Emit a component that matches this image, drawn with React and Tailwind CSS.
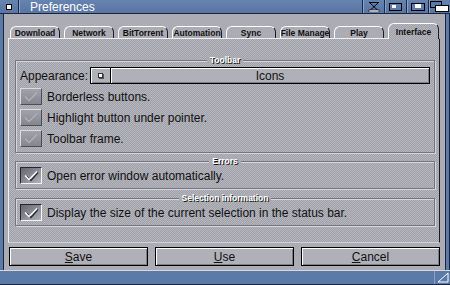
import React from 'react'

const tabs = ['Download', 'Network', 'BitTorrent', 'Automation', 'Sync', 'File Manage', 'Play', 'Interface']

function CheckBox({ checked }) {
  return (
    <div
      className={
        checked
          ? 'w-[22px] h-[17px] shrink-0 flex items-center justify-center border border-t-[#26262e] border-l-[#26262e] border-b-[#f4f4f8] border-r-[#f4f4f8] bg-linear-to-br from-[#66666e] to-[#b2b2ba]'
          : 'w-[22px] h-[17px] shrink-0 flex items-center justify-center border border-t-[#dadae2] border-l-[#dadae2] border-b-[#4e4e56] border-r-[#4e4e56] bg-linear-to-b from-[#a2a2aa] to-[#86868e]'
      }
    >
      <svg width="16" height="13" viewBox="0 0 16 13">
        {checked && <path d="M3 7 L7 11 L14 3" fill="none" stroke="#2a2a32" strokeWidth="1.3" transform="translate(1 0.5)" />}
        <path d="M2 6.5 L6 10.5 L14 2.5" fill="none" stroke={checked ? '#ffffff' : '#b0b0b8'} strokeWidth="1.3" />
      </svg>
    </div>
  )
}

function Group({ label, children, className }) {
  return (
    <div className={`relative border border-[#76767e] shadow-[inset_1px_1px_0_#d6d6de,1px_1px_0_#d6d6de] ${className}`}>
      <div className="absolute left-0 right-0 -top-[6px] flex justify-center">
        <span className="px-[3px] text-[8.5px] leading-[10px] font-bold text-white [text-shadow:1px_1px_0_#1a1a1a] bg-[repeating-conic-gradient(#a0a0a8_0_25%,#b6b6be_0_50%)] bg-[length:2px_2px] bg-fixed">
          {label}
        </span>
      </div>
      {children}
    </div>
  )
}

function Option({ checked, children }) {
  return (
    <div className="flex items-center gap-[5px]">
      <CheckBox checked={checked} />
      <span className="text-[12px] leading-none text-[#111]">{children}</span>
    </div>
  )
}

function Button({ children }) {
  return (
    <button className="flex-1 h-[19px] flex items-center justify-center border border-black bg-[#b0b0b8] shadow-[inset_1px_1px_0_#ffffff,inset_-1px_-1px_0_#7e7e86] text-[12px] leading-none text-[#111]">
      {children}
    </button>
  )
}

function Gadget({ children }) {
  return (
    <div className="w-[22px] h-full flex items-center justify-center border-l border-l-[#1c2c48] shadow-[inset_1px_0_0_#8aa2c8]">
      {children}
    </div>
  )
}

export default function App() {
  return (
    <div className="w-[450px] h-[285px] flex flex-col bg-[#5b7aa8] font-['Liberation_Sans',sans-serif] overflow-hidden select-none">
      {/* title bar */}
      <div className="h-[14px] shrink-0 flex items-stretch border-b border-[#1a2640] bg-linear-to-b from-[#6684b0] to-[#5875a3]">
        <div className="w-[19px] flex items-center justify-center border-r border-r-[#1c2c48] shadow-[1px_0_0_#8aa2c8]">
          <div className="w-[6px] h-[6px] bg-white border border-black" />
        </div>
        <div className="flex-1 pl-[11px] flex items-center text-white text-[12px] leading-none">Preferences</div>
        <Gadget>
          <svg width="14" height="10" viewBox="0 0 14 10">
            <path d="M2 0.5 H12 M3 1 L11 8.5 M11 1 L3 8.5" stroke="#000" strokeWidth="1" fill="none" />
            <rect x="2" y="8" width="10" height="2" fill="#fff" stroke="#000" strokeWidth="0.6" />
          </svg>
        </Gadget>
        <Gadget>
          <div className="w-[13px] h-[8px] border border-black flex items-center pl-[2px]">
            <div className="w-[4px] h-[3px] bg-white" />
          </div>
        </Gadget>
        <Gadget>
          <div className="w-[14px] h-[8px] border border-black flex items-start pl-[3px]">
            <div className="w-[6px] h-[4px] bg-white" />
          </div>
        </Gadget>
        <Gadget>
          <svg width="19" height="11" viewBox="0 0 19 11">
            <rect x="0.5" y="0.5" width="11" height="6" fill="#5b7aa8" stroke="#000" />
            <rect x="5.5" y="4.5" width="13" height="6" fill="#fff" stroke="#000" />
          </svg>
        </Gadget>
      </div>

      {/* body */}
      <div className="flex-1 flex min-h-0">
        <div className="w-[4px] border-r border-[#1a2640]" />
        <div className="flex-1 flex flex-col bg-[#acacb4] pt-[10px]">
          {/* tabs */}
          <div className="flex items-end gap-[4px] pl-[6px] h-[14px]">
            {tabs.map((t) => {
              const active = t === 'Interface'
              return (
                <div
                  key={t}
                  className={
                    active
                      ? 'relative z-10 -mb-px w-[51px] h-[16px] rounded-t-[6px] border-t border-l border-r border-t-white border-l-white border-r-[#1c1c24] bg-[repeating-conic-gradient(#a0a0a8_0_25%,#b6b6be_0_50%)] bg-[length:2px_2px] bg-fixed flex justify-center pt-[3px] text-[8.5px] font-bold leading-[10px] text-[#111] whitespace-nowrap overflow-hidden'
                      : 'w-[50px] h-[12px] rounded-t-[6px] border-t border-l border-r border-t-white border-l-white border-r-[#1c1c24] bg-[#acacb4] flex justify-center pt-[1px] text-[8.5px] font-bold leading-[10px] text-[#111] whitespace-nowrap overflow-hidden'
                  }
                >
                  {t}
                </div>
              )
            })}
          </div>

          {/* panel */}
          <div className="ml-[4px] mr-[5px] h-[205px] border border-t-[#f0f0f4] border-l-[#f0f0f4] border-r-[#1c1c24] border-b-[#d0d0d8] bg-[repeating-conic-gradient(#a0a0a8_0_25%,#b6b6be_0_50%)] bg-[length:2px_2px] bg-fixed pt-[21px] pl-[6px] pr-[4px] flex flex-col">
            <Group label="Toolbar" className="pt-[6px] pb-[5px] pl-[4px] pr-[4px] flex flex-col gap-[4px]">
              <div className="flex items-center">
                <span className="w-[70px] text-[12px] leading-none text-[#111]">Appearance:</span>
                <div className="flex-1 h-[17px] flex items-center border border-black bg-[#b0b0b8] shadow-[inset_1px_1px_0_#ffffff,inset_-1px_-1px_0_#7e7e86]">
                  <div className="w-[20px] h-full flex items-center justify-center border-r border-r-black shadow-[1px_0_0_#ffffff]">
                    <div className="w-[5px] h-[5px] bg-white border border-[#333] shadow-[1px_1px_0_#555]" />
                  </div>
                  <div className="flex-1 text-center text-[12px] leading-none text-[#111]">Icons</div>
                </div>
              </div>
              <Option>Borderless buttons.</Option>
              <Option>Highlight button under pointer.</Option>
              <Option>Toolbar frame.</Option>
            </Group>

            <Group label="Errors" className="mt-[8px] pt-[5px] pb-[4px] pl-[4px]">
              <Option checked>Open error window automatically.</Option>
            </Group>

            <Group label="Selection information" className="mt-[9px] pt-[5px] pb-[4px] pl-[4px]">
              <Option checked>Display the size of the current selection in the status bar.</Option>
            </Group>
          </div>

          {/* buttons */}
          <div className="mt-[4px] pl-[5px] pr-[5px] flex gap-[7px]">
            <Button><span><span className="underline">S</span>ave</span></Button>
            <Button><span><span className="underline">U</span>se</span></Button>
            <Button><span><span className="underline">C</span>ancel</span></Button>
          </div>
        </div>
        <div className="w-[5px] border-l border-[#1a2640] shadow-[inset_-1px_0_0_#1a2640]" />
      </div>

      {/* bottom bar */}
      <div className="h-[15px] shrink-0 flex justify-end border-t border-[#d8d8e0] border-b border-b-[#1a2640]">
        <div className="w-[16px] h-full flex items-center justify-center border-l border-l-[#8aa2c8]">
          <svg width="12" height="11" viewBox="0 0 12 11">
            <path d="M1 10 L11 1 V10 Z" fill="none" stroke="#fff" strokeWidth="1" />
          </svg>
        </div>
      </div>
    </div>
  )
}
